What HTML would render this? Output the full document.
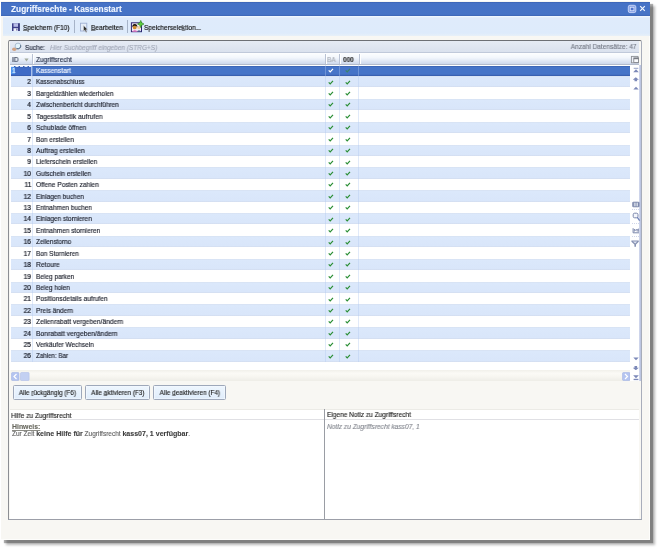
<!DOCTYPE html>
<html><head><meta charset="utf-8"><style>
html,body{margin:0;padding:0;width:659px;height:549px;overflow:hidden;background:#fff;}
body{position:relative;font-family:"Liberation Sans", sans-serif;}
.r{position:absolute;}
.t{position:absolute;white-space:nowrap;line-height:normal;font-family:"Liberation Sans", sans-serif;will-change:transform;-webkit-text-stroke:0.14px currentColor;}
u{text-decoration:underline;text-decoration-thickness:0.6px;text-underline-offset:0.4px;text-decoration-color:rgba(40,40,40,.55);}
</style></head><body>
<div class="r" style="left:0.50px;top:1.00px;width:649.90px;height:539.00px;background:#f8f7f3;border-right:1px solid #fdfdfb;border-bottom:1px solid #fdfdfb;box-sizing:border-box;box-shadow:3px 3px 1px rgba(0,0,0,.3),4.5px 5px 2.5px rgba(0,0,0,.28);"></div>
<div class="r" style="left:1.30px;top:1.50px;width:648.70px;height:14.90px;background:linear-gradient(#3a62b2,#4672c6 10%,#4673c6 88%,#3c64b4);"></div>
<div class="t" style="left:10.60px;transform-origin:0 0;top:4.16px;font-size:8.300px;color:#eef4ff;font-weight:bold;font-style:normal;">Zugriffsrechte - Kassenstart</div>
<svg class="r" style="left:627px;top:4px" width="10" height="10" viewBox="0 0 10 10"><rect x="1.3" y="1.3" width="7.5" height="7.3" rx="1.6" fill="#8aa4e6" stroke="#c2d0f6" stroke-width="1"/><rect x="3.3" y="3.3" width="3.6" height="3.4" fill="#4f72cc" stroke="#d6e0fa" stroke-width="0.8"/></svg>
<svg class="r" style="left:639px;top:5px" width="7" height="7" viewBox="0 0 7 7"><path d="M1.2 1.2 L5.8 5.9 M5.8 1.2 L1.2 5.9" stroke="#f2f6ff" stroke-width="1.2"/></svg>
<div class="r" style="left:3.00px;top:16.40px;width:647.00px;height:19.50px;background:linear-gradient(#f4f9ff,#dfebfb 10%,#deebfb 86%,#e8f0f8);"></div>
<svg class="r" style="left:11px;top:22px" width="10" height="10" viewBox="0 0 10 10"><path d="M1 1.3 H8.6 V9 H1 Z" fill="#3c3e88"/><rect x="2.5" y="1.3" width="4.6" height="3.5" fill="#b8bce8"/><rect x="2.5" y="6.2" width="4.6" height="2.8" fill="#eef0fa"/><rect x="5.4" y="6.6" width="1" height="1.9" fill="#3c3e88"/><rect x="7.6" y="1.3" width="1" height="7.7" fill="#2a2c70"/></svg>
<div class="t" style="left:23.00px;transform-origin:0 0;top:23.60px;font-size:7.065px;color:#141414;font-weight:normal;font-style:normal;transform:scaleX(0.9200);-webkit-text-stroke:0.18px currentColor;"><u>S</u>peichern (F10)</div>
<div class="r" style="left:74.00px;top:19.50px;width:1.00px;height:13.00px;background:#a7b4c8;"></div>
<svg class="r" style="left:79px;top:22px" width="11" height="11" viewBox="0 0 11 11"><rect x="1.5" y="1.2" width="6.3" height="7.8" fill="#e4ecf8" stroke="#9fb0d2" stroke-width="0.9"/><path d="M4.6 3.6 L4.6 9.2 L5.9 8.1 L7 10.4 L7.9 10 L6.8 7.7 L8.5 7.4 Z" fill="#2a2a2a" stroke="#f0f0f0" stroke-width="0.35"/></svg>
<div class="t" style="left:90.80px;transform-origin:0 0;top:23.50px;font-size:7.174px;color:#141414;font-weight:normal;font-style:normal;transform:scaleX(0.9200);-webkit-text-stroke:0.18px currentColor;"><u>B</u>earbeiten</div>
<div class="r" style="left:127.00px;top:19.50px;width:1.00px;height:13.00px;background:#a7b4c8;"></div>
<svg class="r" style="left:130px;top:19.5px" width="15" height="13" viewBox="0 0 15 13"><rect x="1.4" y="2.8" width="10.1" height="8.9" fill="#f2ecf6" stroke="#2c2470" stroke-width="1"/><path d="M6.5 11.7 Q9 8.6 11.5 11.7 Z" fill="#4a5e90"/><circle cx="9" cy="7.6" r="1.7" fill="#f0d0a0"/><path d="M1.9 11.7 Q4.8 8.4 7.8 11.7 Z" fill="#e27cc4"/><circle cx="4.7" cy="7.4" r="1.9" fill="#d08a30"/><path d="M2.1 7.2 Q2.4 4 4.8 4.1 Q7.2 4 7.4 7.2 Q6.5 5.6 4.8 5.7 Q3 5.6 2.1 7.2 Z" fill="#1e140c"/><path d="M10.75 0.4 L11.8 2.9 L14 4 L11.8 5.1 L10.75 7.6 L9.7 5.1 L7.5 4 L9.7 2.9 Z" fill="#5ccf3c" stroke="#237a1c" stroke-width="0.6"/></svg>
<div class="t" style="left:144.40px;transform-origin:0 0;top:23.55px;font-size:7.120px;color:#141414;font-weight:normal;font-style:normal;transform:scaleX(0.9200);-webkit-text-stroke:0.18px currentColor;">Speichersele<u>k</u>tion...</div>
<div class="r" style="left:8.00px;top:40.00px;width:634.00px;height:480.00px;background:#f8f7f3;border-left:1.6px solid #8c8e92;border-top:1.4px solid #6e7075;border-right:1.4px solid #a8adba;border-bottom:1px solid #9aa0ae;box-sizing:border-box;border-radius:2px 2px 0 0;"></div>
<div class="r" style="left:9.60px;top:41.40px;width:629.60px;height:11.20px;background:linear-gradient(#e6ebf4,#dae1ee);border-bottom:1px solid #c0c9da;box-sizing:border-box;"></div>
<svg class="r" style="left:11px;top:41px" width="12" height="11" viewBox="0 0 12 11"><ellipse cx="3.3" cy="8.2" rx="2.2" ry="1.7" fill="#d2a282"/><circle cx="7" cy="5" r="2.9" fill="#e4f4fc" stroke="#9db0c6" stroke-width="0.8"/><path d="M9.6 4.2 A2.9 2.9 0 0 1 5.6 7.6" stroke="#4f6680" stroke-width="1" fill="none"/></svg>
<div class="t" style="left:24.80px;transform-origin:0 0;top:43.55px;font-size:7.011px;color:#242a3c;font-weight:normal;font-style:normal;transform:scaleX(0.9200);">Suche:</div>
<div class="t" style="left:49.80px;transform-origin:0 0;top:43.50px;font-size:7.065px;color:#a3a9b8;font-weight:normal;font-style:italic;transform:scaleX(0.9200);">Hier Suchbegriff eingeben (STRG+S)</div>
<div class="t" style="right:22.50px;transform-origin:100% 0;top:43.45px;font-size:7.120px;color:#757a86;font-weight:normal;font-style:normal;transform:scaleX(0.9200);">Anzahl Datensätze: 47</div>
<div class="r" style="left:9.60px;top:52.60px;width:629.60px;height:12.00px;background:linear-gradient(#fdfeff,#f2f6fc 40%,#cdd8ec 92%,#b4bccc 93%);"></div>
<div class="r" style="left:32.00px;top:53.50px;width:1.00px;height:10.50px;background:#b9c2d4;border-right:1px solid #fff;"></div>
<div class="r" style="left:324.80px;top:53.50px;width:1.00px;height:10.50px;background:#b9c2d4;border-right:1px solid #fff;"></div>
<div class="r" style="left:339.30px;top:53.50px;width:1.00px;height:10.50px;background:#b9c2d4;border-right:1px solid #fff;"></div>
<div class="r" style="left:358.70px;top:53.50px;width:1.00px;height:10.50px;background:#b9c2d4;border-right:1px solid #fff;"></div>
<div class="t" style="left:11.60px;transform-origin:0 0;top:55.50px;font-size:7.065px;color:#263048;font-weight:normal;font-style:normal;transform:scaleX(0.9200);">ID</div>
<svg class="r" style="left:23.5px;top:58px" width="6" height="5" viewBox="0 0 6 5"><path d="M0.4 0.4 H4.6 L2.5 3.6 Z" fill="#a4ab9e"/></svg>
<div class="t" style="left:35.80px;transform-origin:0 0;top:55.50px;font-size:7.065px;color:#263048;font-weight:normal;font-style:normal;transform:scaleX(0.9200);">Zugriffsrecht</div>
<div class="t" style="left:327.40px;transform-origin:0 0;top:55.50px;font-size:7.065px;color:#a9adb5;font-weight:normal;font-style:normal;transform:scaleX(0.9200);">BA</div>
<div class="t" style="left:342.50px;transform-origin:0 0;top:55.50px;font-size:7.065px;color:#333;font-weight:bold;font-style:normal;transform:scaleX(0.9200);">000</div>
<svg class="r" style="left:630px;top:55px" width="10" height="9" viewBox="0 0 10 9"><rect x="1.4" y="1.4" width="6.6" height="6.4" fill="#eef1f8" stroke="#8e9196" stroke-width="0.9"/><rect x="3.8" y="2.9" width="4.8" height="4.6" fill="#fafbfd" stroke="#7a7d84" stroke-width="0.8"/><rect x="3.8" y="2.9" width="4.8" height="1.3" fill="#7a7d84"/></svg>
<div class="r" style="left:9.60px;top:64.60px;width:620.80px;height:305.70px;background:#fff;"></div>
<div class="r" style="left:10.80px;top:65.50px;width:619.60px;height:10.22px;background:linear-gradient(#3860b0,#4574c8 14%,#4674c8 82%,#3458a8);"></div>
<div class="r" style="left:10.80px;top:65.50px;width:21.50px;height:10.22px;background:linear-gradient(#3a62b6,#3f6bc6 14%,#3f6bc6 84%,#3458a8);border-top:1px dashed #dfe8fa;border-right:1px solid #a8c0ec;box-sizing:border-box;"></div>
<div class="r" style="left:11.20px;top:66.80px;width:4.20px;height:7.42px;background:#4f94ec;"></div>
<div class="t" style="left:11.60px;transform-origin:0 0;top:67.00px;font-size:7.065px;color:#e8f6ff;font-weight:normal;font-style:normal;transform:scaleX(0.9200);">1</div>
<div class="t" style="left:35.77px;top:67.00px;font-size:6.85px;color:#f2f6ff;transform-origin:0 0;transform:scaleX(0.9629)">Kassenstart</div>
<svg class="r" style="left:328.2px;top:68.19999999999999px" width="6" height="5" viewBox="0 0 6 5"><path d="M0.7 2.4 L2.2 3.9 L5 0.9" stroke="#ffffff" stroke-width="1.2" fill="none"/></svg>
<svg class="r" style="left:344.8px;top:68.19999999999999px" width="6" height="5" viewBox="0 0 6 5"><path d="M0.7 2.4 L2.2 3.9 L5 0.9" stroke="#3b8468" stroke-width="1.2" fill="none"/></svg>
<div class="r" style="left:10.80px;top:76.02px;width:619.60px;height:11.42px;background:linear-gradient(#d6e0f0,#dbe8fb 10%,#d9e6fa 88%,#d2dcee);"></div>
<div class="t" style="right:627.70px;transform-origin:100% 0;top:78.00px;font-size:7.174px;color:#121622;font-weight:normal;font-style:normal;transform:scaleX(0.9200);-webkit-text-stroke:0.22px currentColor;">2</div>
<div class="t" style="left:35.80px;top:78.00px;font-size:6.85px;color:#181c28;transform-origin:0 0;transform:scaleX(0.9110)">Kassenabschluss</div>
<svg class="r" style="left:328.2px;top:79.61999999999999px" width="6" height="5" viewBox="0 0 6 5"><path d="M0.7 2.4 L2.2 3.9 L5 0.9" stroke="#2a8e34" stroke-width="1.2" fill="none"/></svg>
<svg class="r" style="left:344.8px;top:79.61999999999999px" width="6" height="5" viewBox="0 0 6 5"><path d="M0.7 2.4 L2.2 3.9 L5 0.9" stroke="#2a8e34" stroke-width="1.2" fill="none"/></svg>
<div class="r" style="left:9.60px;top:87.44px;width:620.80px;height:11.42px;background:#fff;"></div>
<div class="t" style="right:627.70px;transform-origin:100% 0;top:90.00px;font-size:7.174px;color:#121622;font-weight:normal;font-style:normal;transform:scaleX(0.9200);-webkit-text-stroke:0.22px currentColor;">3</div>
<div class="t" style="left:35.78px;top:90.00px;font-size:6.85px;color:#181c28;transform-origin:0 0;transform:scaleX(0.9406)">Bargeldzählen wiederholen</div>
<svg class="r" style="left:328.2px;top:91.03999999999999px" width="6" height="5" viewBox="0 0 6 5"><path d="M0.7 2.4 L2.2 3.9 L5 0.9" stroke="#2a8e34" stroke-width="1.2" fill="none"/></svg>
<svg class="r" style="left:344.8px;top:91.03999999999999px" width="6" height="5" viewBox="0 0 6 5"><path d="M0.7 2.4 L2.2 3.9 L5 0.9" stroke="#2a8e34" stroke-width="1.2" fill="none"/></svg>
<div class="r" style="left:10.80px;top:98.86px;width:619.60px;height:11.42px;background:linear-gradient(#d6e0f0,#dbe8fb 10%,#d9e6fa 88%,#d2dcee);"></div>
<div class="t" style="right:627.70px;transform-origin:100% 0;top:101.00px;font-size:7.174px;color:#121622;font-weight:normal;font-style:normal;transform:scaleX(0.9200);-webkit-text-stroke:0.22px currentColor;">4</div>
<div class="t" style="left:36.17px;top:101.00px;font-size:6.85px;color:#181c28;transform-origin:0 0;transform:scaleX(0.9427)">Zwischenbericht durchführen</div>
<svg class="r" style="left:328.2px;top:102.45999999999998px" width="6" height="5" viewBox="0 0 6 5"><path d="M0.7 2.4 L2.2 3.9 L5 0.9" stroke="#2a8e34" stroke-width="1.2" fill="none"/></svg>
<svg class="r" style="left:344.8px;top:102.45999999999998px" width="6" height="5" viewBox="0 0 6 5"><path d="M0.7 2.4 L2.2 3.9 L5 0.9" stroke="#2a8e34" stroke-width="1.2" fill="none"/></svg>
<div class="r" style="left:9.60px;top:110.28px;width:620.80px;height:11.42px;background:#fff;"></div>
<div class="t" style="right:627.70px;transform-origin:100% 0;top:113.00px;font-size:7.174px;color:#121622;font-weight:normal;font-style:normal;transform:scaleX(0.9200);-webkit-text-stroke:0.22px currentColor;">5</div>
<div class="t" style="left:36.17px;top:113.00px;font-size:6.85px;color:#181c28;transform-origin:0 0;transform:scaleX(0.9787)">Tagesstatistik aufrufen</div>
<svg class="r" style="left:328.2px;top:113.88px" width="6" height="5" viewBox="0 0 6 5"><path d="M0.7 2.4 L2.2 3.9 L5 0.9" stroke="#2a8e34" stroke-width="1.2" fill="none"/></svg>
<svg class="r" style="left:344.8px;top:113.88px" width="6" height="5" viewBox="0 0 6 5"><path d="M0.7 2.4 L2.2 3.9 L5 0.9" stroke="#2a8e34" stroke-width="1.2" fill="none"/></svg>
<div class="r" style="left:10.80px;top:121.70px;width:619.60px;height:11.42px;background:linear-gradient(#d6e0f0,#dbe8fb 10%,#d9e6fa 88%,#d2dcee);"></div>
<div class="t" style="right:627.70px;transform-origin:100% 0;top:124.00px;font-size:7.174px;color:#121622;font-weight:normal;font-style:normal;transform:scaleX(0.9200);-webkit-text-stroke:0.22px currentColor;">6</div>
<div class="t" style="left:36.04px;top:124.00px;font-size:6.85px;color:#181c28;transform-origin:0 0;transform:scaleX(0.9472)">Schublade öffnen</div>
<svg class="r" style="left:328.2px;top:125.29999999999998px" width="6" height="5" viewBox="0 0 6 5"><path d="M0.7 2.4 L2.2 3.9 L5 0.9" stroke="#2a8e34" stroke-width="1.2" fill="none"/></svg>
<svg class="r" style="left:344.8px;top:125.29999999999998px" width="6" height="5" viewBox="0 0 6 5"><path d="M0.7 2.4 L2.2 3.9 L5 0.9" stroke="#2a8e34" stroke-width="1.2" fill="none"/></svg>
<div class="r" style="left:9.60px;top:133.12px;width:620.80px;height:11.42px;background:#fff;"></div>
<div class="t" style="right:627.70px;transform-origin:100% 0;top:136.00px;font-size:7.174px;color:#121622;font-weight:normal;font-style:normal;transform:scaleX(0.9200);-webkit-text-stroke:0.22px currentColor;">7</div>
<div class="t" style="left:35.78px;top:136.00px;font-size:6.85px;color:#181c28;transform-origin:0 0;transform:scaleX(0.9502)">Bon erstellen</div>
<svg class="r" style="left:328.2px;top:136.72px" width="6" height="5" viewBox="0 0 6 5"><path d="M0.7 2.4 L2.2 3.9 L5 0.9" stroke="#2a8e34" stroke-width="1.2" fill="none"/></svg>
<svg class="r" style="left:344.8px;top:136.72px" width="6" height="5" viewBox="0 0 6 5"><path d="M0.7 2.4 L2.2 3.9 L5 0.9" stroke="#2a8e34" stroke-width="1.2" fill="none"/></svg>
<div class="r" style="left:10.80px;top:144.54px;width:619.60px;height:11.42px;background:linear-gradient(#d6e0f0,#dbe8fb 10%,#d9e6fa 88%,#d2dcee);"></div>
<div class="t" style="right:627.70px;transform-origin:100% 0;top:147.00px;font-size:7.174px;color:#121622;font-weight:normal;font-style:normal;transform:scaleX(0.9200);-webkit-text-stroke:0.22px currentColor;">8</div>
<div class="t" style="left:36.30px;top:147.00px;font-size:6.85px;color:#181c28;transform-origin:0 0;transform:scaleX(0.9786)">Auftrag erstellen</div>
<svg class="r" style="left:328.2px;top:148.14px" width="6" height="5" viewBox="0 0 6 5"><path d="M0.7 2.4 L2.2 3.9 L5 0.9" stroke="#2a8e34" stroke-width="1.2" fill="none"/></svg>
<svg class="r" style="left:344.8px;top:148.14px" width="6" height="5" viewBox="0 0 6 5"><path d="M0.7 2.4 L2.2 3.9 L5 0.9" stroke="#2a8e34" stroke-width="1.2" fill="none"/></svg>
<div class="r" style="left:9.60px;top:155.96px;width:620.80px;height:11.42px;background:#fff;"></div>
<div class="t" style="right:627.70px;transform-origin:100% 0;top:158.00px;font-size:7.174px;color:#121622;font-weight:normal;font-style:normal;transform:scaleX(0.9200);-webkit-text-stroke:0.22px currentColor;">9</div>
<div class="t" style="left:35.78px;top:158.00px;font-size:6.85px;color:#181c28;transform-origin:0 0;transform:scaleX(0.9481)">Lieferschein erstellen</div>
<svg class="r" style="left:328.2px;top:159.55999999999997px" width="6" height="5" viewBox="0 0 6 5"><path d="M0.7 2.4 L2.2 3.9 L5 0.9" stroke="#2a8e34" stroke-width="1.2" fill="none"/></svg>
<svg class="r" style="left:344.8px;top:159.55999999999997px" width="6" height="5" viewBox="0 0 6 5"><path d="M0.7 2.4 L2.2 3.9 L5 0.9" stroke="#2a8e34" stroke-width="1.2" fill="none"/></svg>
<div class="r" style="left:10.80px;top:167.38px;width:619.60px;height:11.42px;background:linear-gradient(#d6e0f0,#dbe8fb 10%,#d9e6fa 88%,#d2dcee);"></div>
<div class="t" style="right:627.70px;transform-origin:100% 0;top:170.00px;font-size:7.174px;color:#121622;font-weight:normal;font-style:normal;transform:scaleX(0.9200);-webkit-text-stroke:0.22px currentColor;">10</div>
<div class="t" style="left:36.04px;top:170.00px;font-size:6.85px;color:#181c28;transform-origin:0 0;transform:scaleX(0.9404)">Gutschein erstellen</div>
<svg class="r" style="left:328.2px;top:170.98px" width="6" height="5" viewBox="0 0 6 5"><path d="M0.7 2.4 L2.2 3.9 L5 0.9" stroke="#2a8e34" stroke-width="1.2" fill="none"/></svg>
<svg class="r" style="left:344.8px;top:170.98px" width="6" height="5" viewBox="0 0 6 5"><path d="M0.7 2.4 L2.2 3.9 L5 0.9" stroke="#2a8e34" stroke-width="1.2" fill="none"/></svg>
<div class="r" style="left:9.60px;top:178.80px;width:620.80px;height:11.42px;background:#fff;"></div>
<div class="t" style="right:627.70px;transform-origin:100% 0;top:181.00px;font-size:7.174px;color:#121622;font-weight:normal;font-style:normal;transform:scaleX(0.9200);-webkit-text-stroke:0.22px currentColor;">11</div>
<div class="t" style="left:36.04px;top:181.00px;font-size:6.85px;color:#181c28;transform-origin:0 0;transform:scaleX(0.9558)">Offene Posten zahlen</div>
<svg class="r" style="left:328.2px;top:182.4px" width="6" height="5" viewBox="0 0 6 5"><path d="M0.7 2.4 L2.2 3.9 L5 0.9" stroke="#2a8e34" stroke-width="1.2" fill="none"/></svg>
<svg class="r" style="left:344.8px;top:182.4px" width="6" height="5" viewBox="0 0 6 5"><path d="M0.7 2.4 L2.2 3.9 L5 0.9" stroke="#2a8e34" stroke-width="1.2" fill="none"/></svg>
<div class="r" style="left:10.80px;top:190.22px;width:619.60px;height:11.42px;background:linear-gradient(#d6e0f0,#dbe8fb 10%,#d9e6fa 88%,#d2dcee);"></div>
<div class="t" style="right:627.70px;transform-origin:100% 0;top:193.00px;font-size:7.174px;color:#121622;font-weight:normal;font-style:normal;transform:scaleX(0.9200);-webkit-text-stroke:0.22px currentColor;">12</div>
<div class="t" style="left:35.79px;top:193.00px;font-size:6.85px;color:#181c28;transform-origin:0 0;transform:scaleX(0.9379)">Einlagen buchen</div>
<svg class="r" style="left:328.2px;top:193.82px" width="6" height="5" viewBox="0 0 6 5"><path d="M0.7 2.4 L2.2 3.9 L5 0.9" stroke="#2a8e34" stroke-width="1.2" fill="none"/></svg>
<svg class="r" style="left:344.8px;top:193.82px" width="6" height="5" viewBox="0 0 6 5"><path d="M0.7 2.4 L2.2 3.9 L5 0.9" stroke="#2a8e34" stroke-width="1.2" fill="none"/></svg>
<div class="r" style="left:9.60px;top:201.64px;width:620.80px;height:11.42px;background:#fff;"></div>
<div class="t" style="right:627.70px;transform-origin:100% 0;top:204.00px;font-size:7.174px;color:#121622;font-weight:normal;font-style:normal;transform:scaleX(0.9200);-webkit-text-stroke:0.22px currentColor;">13</div>
<div class="t" style="left:35.78px;top:204.00px;font-size:6.85px;color:#181c28;transform-origin:0 0;transform:scaleX(0.9424)">Entnahmen buchen</div>
<svg class="r" style="left:328.2px;top:205.23999999999998px" width="6" height="5" viewBox="0 0 6 5"><path d="M0.7 2.4 L2.2 3.9 L5 0.9" stroke="#2a8e34" stroke-width="1.2" fill="none"/></svg>
<svg class="r" style="left:344.8px;top:205.23999999999998px" width="6" height="5" viewBox="0 0 6 5"><path d="M0.7 2.4 L2.2 3.9 L5 0.9" stroke="#2a8e34" stroke-width="1.2" fill="none"/></svg>
<div class="r" style="left:10.80px;top:213.06px;width:619.60px;height:11.42px;background:linear-gradient(#d6e0f0,#dbe8fb 10%,#d9e6fa 88%,#d2dcee);"></div>
<div class="t" style="right:627.70px;transform-origin:100% 0;top:215.00px;font-size:7.174px;color:#121622;font-weight:normal;font-style:normal;transform:scaleX(0.9200);-webkit-text-stroke:0.22px currentColor;">14</div>
<div class="t" style="left:35.78px;top:215.00px;font-size:6.85px;color:#181c28;transform-origin:0 0;transform:scaleX(0.9468)">Einlagen stornieren</div>
<svg class="r" style="left:328.2px;top:216.66px" width="6" height="5" viewBox="0 0 6 5"><path d="M0.7 2.4 L2.2 3.9 L5 0.9" stroke="#2a8e34" stroke-width="1.2" fill="none"/></svg>
<svg class="r" style="left:344.8px;top:216.66px" width="6" height="5" viewBox="0 0 6 5"><path d="M0.7 2.4 L2.2 3.9 L5 0.9" stroke="#2a8e34" stroke-width="1.2" fill="none"/></svg>
<div class="r" style="left:9.60px;top:224.48px;width:620.80px;height:11.42px;background:#fff;"></div>
<div class="t" style="right:627.70px;transform-origin:100% 0;top:227.00px;font-size:7.174px;color:#121622;font-weight:normal;font-style:normal;transform:scaleX(0.9200);-webkit-text-stroke:0.22px currentColor;">15</div>
<div class="t" style="left:35.78px;top:227.00px;font-size:6.85px;color:#181c28;transform-origin:0 0;transform:scaleX(0.9527)">Entnahmen stornieren</div>
<svg class="r" style="left:328.2px;top:228.07999999999998px" width="6" height="5" viewBox="0 0 6 5"><path d="M0.7 2.4 L2.2 3.9 L5 0.9" stroke="#2a8e34" stroke-width="1.2" fill="none"/></svg>
<svg class="r" style="left:344.8px;top:228.07999999999998px" width="6" height="5" viewBox="0 0 6 5"><path d="M0.7 2.4 L2.2 3.9 L5 0.9" stroke="#2a8e34" stroke-width="1.2" fill="none"/></svg>
<div class="r" style="left:10.80px;top:235.90px;width:619.60px;height:11.42px;background:linear-gradient(#d6e0f0,#dbe8fb 10%,#d9e6fa 88%,#d2dcee);"></div>
<div class="t" style="right:627.70px;transform-origin:100% 0;top:238.00px;font-size:7.174px;color:#121622;font-weight:normal;font-style:normal;transform:scaleX(0.9200);-webkit-text-stroke:0.22px currentColor;">16</div>
<div class="t" style="left:36.17px;top:238.00px;font-size:6.85px;color:#181c28;transform-origin:0 0;transform:scaleX(0.9366)">Zeilenstorno</div>
<svg class="r" style="left:328.2px;top:239.5px" width="6" height="5" viewBox="0 0 6 5"><path d="M0.7 2.4 L2.2 3.9 L5 0.9" stroke="#2a8e34" stroke-width="1.2" fill="none"/></svg>
<svg class="r" style="left:344.8px;top:239.5px" width="6" height="5" viewBox="0 0 6 5"><path d="M0.7 2.4 L2.2 3.9 L5 0.9" stroke="#2a8e34" stroke-width="1.2" fill="none"/></svg>
<div class="r" style="left:9.60px;top:247.32px;width:620.80px;height:11.42px;background:#fff;"></div>
<div class="t" style="right:627.70px;transform-origin:100% 0;top:250.00px;font-size:7.174px;color:#121622;font-weight:normal;font-style:normal;transform:scaleX(0.9200);-webkit-text-stroke:0.22px currentColor;">17</div>
<div class="t" style="left:35.78px;top:250.00px;font-size:6.85px;color:#181c28;transform-origin:0 0;transform:scaleX(0.9404)">Bon Stornieren</div>
<svg class="r" style="left:328.2px;top:250.92px" width="6" height="5" viewBox="0 0 6 5"><path d="M0.7 2.4 L2.2 3.9 L5 0.9" stroke="#2a8e34" stroke-width="1.2" fill="none"/></svg>
<svg class="r" style="left:344.8px;top:250.92px" width="6" height="5" viewBox="0 0 6 5"><path d="M0.7 2.4 L2.2 3.9 L5 0.9" stroke="#2a8e34" stroke-width="1.2" fill="none"/></svg>
<div class="r" style="left:10.80px;top:258.74px;width:619.60px;height:11.42px;background:linear-gradient(#d6e0f0,#dbe8fb 10%,#d9e6fa 88%,#d2dcee);"></div>
<div class="t" style="right:627.70px;transform-origin:100% 0;top:261.00px;font-size:7.174px;color:#121622;font-weight:normal;font-style:normal;transform:scaleX(0.9200);-webkit-text-stroke:0.22px currentColor;">18</div>
<div class="t" style="left:35.77px;top:261.00px;font-size:6.85px;color:#181c28;transform-origin:0 0;transform:scaleX(0.9761)">Retoure</div>
<svg class="r" style="left:328.2px;top:262.34000000000003px" width="6" height="5" viewBox="0 0 6 5"><path d="M0.7 2.4 L2.2 3.9 L5 0.9" stroke="#2a8e34" stroke-width="1.2" fill="none"/></svg>
<svg class="r" style="left:344.8px;top:262.34000000000003px" width="6" height="5" viewBox="0 0 6 5"><path d="M0.7 2.4 L2.2 3.9 L5 0.9" stroke="#2a8e34" stroke-width="1.2" fill="none"/></svg>
<div class="r" style="left:9.60px;top:270.16px;width:620.80px;height:11.42px;background:#fff;"></div>
<div class="t" style="right:627.70px;transform-origin:100% 0;top:273.00px;font-size:7.174px;color:#121622;font-weight:normal;font-style:normal;transform:scaleX(0.9200);-webkit-text-stroke:0.22px currentColor;">19</div>
<div class="t" style="left:35.78px;top:273.00px;font-size:6.85px;color:#181c28;transform-origin:0 0;transform:scaleX(0.9461)">Beleg parken</div>
<svg class="r" style="left:328.2px;top:273.76px" width="6" height="5" viewBox="0 0 6 5"><path d="M0.7 2.4 L2.2 3.9 L5 0.9" stroke="#2a8e34" stroke-width="1.2" fill="none"/></svg>
<svg class="r" style="left:344.8px;top:273.76px" width="6" height="5" viewBox="0 0 6 5"><path d="M0.7 2.4 L2.2 3.9 L5 0.9" stroke="#2a8e34" stroke-width="1.2" fill="none"/></svg>
<div class="r" style="left:10.80px;top:281.58px;width:619.60px;height:11.42px;background:linear-gradient(#d6e0f0,#dbe8fb 10%,#d9e6fa 88%,#d2dcee);"></div>
<div class="t" style="right:627.70px;transform-origin:100% 0;top:284.00px;font-size:7.174px;color:#121622;font-weight:normal;font-style:normal;transform:scaleX(0.9200);-webkit-text-stroke:0.22px currentColor;">20</div>
<div class="t" style="left:35.79px;top:284.00px;font-size:6.85px;color:#181c28;transform-origin:0 0;transform:scaleX(0.9373)">Beleg holen</div>
<svg class="r" style="left:328.2px;top:285.18px" width="6" height="5" viewBox="0 0 6 5"><path d="M0.7 2.4 L2.2 3.9 L5 0.9" stroke="#2a8e34" stroke-width="1.2" fill="none"/></svg>
<svg class="r" style="left:344.8px;top:285.18px" width="6" height="5" viewBox="0 0 6 5"><path d="M0.7 2.4 L2.2 3.9 L5 0.9" stroke="#2a8e34" stroke-width="1.2" fill="none"/></svg>
<div class="r" style="left:9.60px;top:293.00px;width:620.80px;height:11.42px;background:#fff;"></div>
<div class="t" style="right:627.70px;transform-origin:100% 0;top:295.00px;font-size:7.174px;color:#121622;font-weight:normal;font-style:normal;transform:scaleX(0.9200);-webkit-text-stroke:0.22px currentColor;">21</div>
<div class="t" style="left:35.77px;top:295.00px;font-size:6.85px;color:#181c28;transform-origin:0 0;transform:scaleX(0.9606)">Positionsdetails aufrufen</div>
<svg class="r" style="left:328.2px;top:296.6px" width="6" height="5" viewBox="0 0 6 5"><path d="M0.7 2.4 L2.2 3.9 L5 0.9" stroke="#2a8e34" stroke-width="1.2" fill="none"/></svg>
<svg class="r" style="left:344.8px;top:296.6px" width="6" height="5" viewBox="0 0 6 5"><path d="M0.7 2.4 L2.2 3.9 L5 0.9" stroke="#2a8e34" stroke-width="1.2" fill="none"/></svg>
<div class="r" style="left:10.80px;top:304.42px;width:619.60px;height:11.42px;background:linear-gradient(#d6e0f0,#dbe8fb 10%,#d9e6fa 88%,#d2dcee);"></div>
<div class="t" style="right:627.70px;transform-origin:100% 0;top:307.00px;font-size:7.174px;color:#121622;font-weight:normal;font-style:normal;transform:scaleX(0.9200);-webkit-text-stroke:0.22px currentColor;">22</div>
<div class="t" style="left:35.78px;top:307.00px;font-size:6.85px;color:#181c28;transform-origin:0 0;transform:scaleX(0.9547)">Preis ändern</div>
<svg class="r" style="left:328.2px;top:308.02px" width="6" height="5" viewBox="0 0 6 5"><path d="M0.7 2.4 L2.2 3.9 L5 0.9" stroke="#2a8e34" stroke-width="1.2" fill="none"/></svg>
<svg class="r" style="left:344.8px;top:308.02px" width="6" height="5" viewBox="0 0 6 5"><path d="M0.7 2.4 L2.2 3.9 L5 0.9" stroke="#2a8e34" stroke-width="1.2" fill="none"/></svg>
<div class="r" style="left:9.60px;top:315.84px;width:620.80px;height:11.42px;background:#fff;"></div>
<div class="t" style="right:627.70px;transform-origin:100% 0;top:318.00px;font-size:7.174px;color:#121622;font-weight:normal;font-style:normal;transform:scaleX(0.9200);-webkit-text-stroke:0.22px currentColor;">23</div>
<div class="t" style="left:36.17px;top:318.00px;font-size:6.85px;color:#181c28;transform-origin:0 0;transform:scaleX(0.9706)">Zeilenrabatt vergeben/ändern</div>
<svg class="r" style="left:328.2px;top:319.44000000000005px" width="6" height="5" viewBox="0 0 6 5"><path d="M0.7 2.4 L2.2 3.9 L5 0.9" stroke="#2a8e34" stroke-width="1.2" fill="none"/></svg>
<svg class="r" style="left:344.8px;top:319.44000000000005px" width="6" height="5" viewBox="0 0 6 5"><path d="M0.7 2.4 L2.2 3.9 L5 0.9" stroke="#2a8e34" stroke-width="1.2" fill="none"/></svg>
<div class="r" style="left:10.80px;top:327.26px;width:619.60px;height:11.42px;background:linear-gradient(#d6e0f0,#dbe8fb 10%,#d9e6fa 88%,#d2dcee);"></div>
<div class="t" style="right:627.70px;transform-origin:100% 0;top:330.00px;font-size:7.174px;color:#121622;font-weight:normal;font-style:normal;transform:scaleX(0.9200);-webkit-text-stroke:0.22px currentColor;">24</div>
<div class="t" style="left:35.76px;top:330.00px;font-size:6.85px;color:#181c28;transform-origin:0 0;transform:scaleX(0.9797)">Bonrabatt vergeben/ändern</div>
<svg class="r" style="left:328.2px;top:330.86px" width="6" height="5" viewBox="0 0 6 5"><path d="M0.7 2.4 L2.2 3.9 L5 0.9" stroke="#2a8e34" stroke-width="1.2" fill="none"/></svg>
<svg class="r" style="left:344.8px;top:330.86px" width="6" height="5" viewBox="0 0 6 5"><path d="M0.7 2.4 L2.2 3.9 L5 0.9" stroke="#2a8e34" stroke-width="1.2" fill="none"/></svg>
<div class="r" style="left:9.60px;top:338.68px;width:620.80px;height:11.42px;background:#fff;"></div>
<div class="t" style="right:627.70px;transform-origin:100% 0;top:341.00px;font-size:7.174px;color:#121622;font-weight:normal;font-style:normal;transform:scaleX(0.9200);-webkit-text-stroke:0.22px currentColor;">25</div>
<div class="t" style="left:36.30px;top:341.00px;font-size:6.85px;color:#181c28;transform-origin:0 0;transform:scaleX(0.9458)">Verkäufer Wechseln</div>
<svg class="r" style="left:328.2px;top:342.28px" width="6" height="5" viewBox="0 0 6 5"><path d="M0.7 2.4 L2.2 3.9 L5 0.9" stroke="#2a8e34" stroke-width="1.2" fill="none"/></svg>
<svg class="r" style="left:344.8px;top:342.28px" width="6" height="5" viewBox="0 0 6 5"><path d="M0.7 2.4 L2.2 3.9 L5 0.9" stroke="#2a8e34" stroke-width="1.2" fill="none"/></svg>
<div class="r" style="left:10.80px;top:350.10px;width:619.60px;height:11.42px;background:linear-gradient(#d6e0f0,#dbe8fb 10%,#d9e6fa 88%,#d2dcee);"></div>
<div class="t" style="right:627.70px;transform-origin:100% 0;top:352.00px;font-size:7.174px;color:#121622;font-weight:normal;font-style:normal;transform:scaleX(0.9200);-webkit-text-stroke:0.22px currentColor;">26</div>
<div class="t" style="left:36.18px;top:352.00px;font-size:6.85px;color:#181c28;transform-origin:0 0;transform:scaleX(0.9060)">Zahlen: Bar</div>
<svg class="r" style="left:328.2px;top:353.70000000000005px" width="6" height="5" viewBox="0 0 6 5"><path d="M0.7 2.4 L2.2 3.9 L5 0.9" stroke="#2a8e34" stroke-width="1.2" fill="none"/></svg>
<svg class="r" style="left:344.8px;top:353.70000000000005px" width="6" height="5" viewBox="0 0 6 5"><path d="M0.7 2.4 L2.2 3.9 L5 0.9" stroke="#2a8e34" stroke-width="1.2" fill="none"/></svg>
<div class="r" style="left:32.20px;top:64.60px;width:0.90px;height:296.92px;background:rgba(175,200,238,.38);"></div>
<div class="r" style="left:325.20px;top:64.60px;width:0.90px;height:296.92px;background:rgba(175,200,238,.38);"></div>
<div class="r" style="left:339.00px;top:64.60px;width:0.90px;height:296.92px;background:rgba(175,200,238,.38);"></div>
<div class="r" style="left:358.30px;top:64.60px;width:0.90px;height:296.92px;background:rgba(175,200,238,.38);"></div>
<div class="r" style="left:630.40px;top:64.60px;width:9.80px;height:305.70px;background:#fff;"></div>
<div class="r" style="left:638.80px;top:64.60px;width:1.80px;height:316.60px;background:linear-gradient(90deg,#d6dcf0,#b4bedc);"></div>
<svg class="r" style="left:633px;top:66.6px" width="7" height="6" viewBox="0 0 7 6"><rect x="0.7" y="0.8" width="4.6" height="1.0" fill="#7b88b8" opacity=".8"/><path d="M0.2 5.2 L3 2.3 L5.8 5.2 Z" fill="#7b88b8"/></svg>
<svg class="r" style="left:633px;top:76.9px" width="7" height="5" viewBox="0 0 7 5"><path d="M2.8 0.2 L5.9 2.7 H4.1 V4.3 H1.5 V2.7 H-0.3 Z" fill="#7b88b8"/></svg>
<svg class="r" style="left:633px;top:86px" width="7" height="4" viewBox="0 0 7 4"><path d="M0.3 3.6 L3 0.8 L5.7 3.6 Z" fill="#7b88b8"/></svg>
<svg class="r" style="left:632px;top:200.5px" width="8" height="7" viewBox="0 0 8 7"><path d="M1.2 1.2 H6.6 V5.8 H1.2 Z" fill="#eef1f8" stroke="#7a86aa" stroke-width="0.9"/><path d="M3.1 1 V6 M4.8 1 V6" stroke="#7a86aa" stroke-width="0.8"/><path d="M1 1.2 V5.8 M6.8 1.2 V5.8" stroke="#7a86aa" stroke-width="1.3"/></svg>
<div class="r" style="left:632.00px;top:209.40px;width:7.00px;height:1.00px;background:repeating-linear-gradient(90deg,#c4cce4 0 1px,transparent 1px 2px);opacity:.8"></div>
<svg class="r" style="left:631.5px;top:212px" width="9" height="10" viewBox="0 0 9 10"><rect x="1.2" y="1.2" width="4.8" height="4.6" rx="1.4" fill="#f4f6fc" stroke="#7a86aa" stroke-width="1"/><path d="M5.2 5.2 L7.6 8.6" stroke="#6f82b8" stroke-width="1.3"/></svg>
<div class="r" style="left:632.00px;top:222.80px;width:7.00px;height:1.00px;background:repeating-linear-gradient(90deg,#c4cce4 0 1px,transparent 1px 2px);opacity:.8"></div>
<svg class="r" style="left:632px;top:227.5px" width="8" height="6" viewBox="0 0 8 6"><path d="M1.1 0.2 V4.8 H7" stroke="#7a86aa" stroke-width="1" fill="none"/><path d="M2.4 3.6 V1 L3.8 2.6 L5.2 1 V3.6" stroke="#7a86aa" stroke-width="0.9" fill="none"/><path d="M6.4 0.6 V3.8" stroke="#7a86aa" stroke-width="0.9"/></svg>
<div class="r" style="left:632.00px;top:236.00px;width:7.00px;height:1.00px;background:repeating-linear-gradient(90deg,#c4cce4 0 1px,transparent 1px 2px);opacity:.8"></div>
<svg class="r" style="left:631px;top:240px" width="9" height="8" viewBox="0 0 9 8"><path d="M0.4 0.6 H7.8 V1.8 L5 4.4 V6.8 H3.4 V4.4 L0.4 1.8 Z" fill="#7a86aa" opacity=".9"/><path d="M2 1.6 H6.2 L4.2 3.6 Z" fill="#dfe4f2"/></svg>
<svg class="r" style="left:633px;top:357px" width="7" height="4" viewBox="0 0 7 4"><path d="M0.3 0.5 L3 3.2 L5.7 0.5 Z" fill="#7b88b8"/></svg>
<svg class="r" style="left:633px;top:365.6px" width="7" height="5" viewBox="0 0 7 5"><path d="M1.5 0.1 H4.1 V1.7 H5.9 L2.8 4.3 L-0.3 1.7 H1.5 Z" fill="#7b88b8"/></svg>
<div class="r" style="left:10.80px;top:369.60px;width:619.60px;height:11.60px;background:linear-gradient(#f1f0ea,#fbfaf6 30%,#f7f6f1 60%,#efeee8 95%);"></div>
<svg class="r" style="left:10.5px;top:371.5px" width="9" height="9" viewBox="0 0 9 9"><rect x="0.5" y="0.5" width="7.5" height="8" rx="1" fill="#b4c4f0" stroke="#a6b6e6" stroke-width="0.6"/><path d="M5.5 2 L3 4.5 L5.5 7" stroke="#fff" stroke-width="1.2" fill="none"/></svg>
<svg class="r" style="left:19.8px;top:371.5px" width="10" height="9" viewBox="0 0 10 9"><rect x="0.5" y="0.5" width="8.6" height="8" rx="1" fill="#c3d0f2" stroke="#b2c0ea" stroke-width="0.6"/></svg>
<svg class="r" style="left:621.5px;top:371.5px" width="9" height="9" viewBox="0 0 9 9"><rect x="0.5" y="0.5" width="7.6" height="8" rx="1" fill="#b4c4f0" stroke="#a6b6e6" stroke-width="0.6"/><path d="M3 2 L5.5 4.5 L3 7" stroke="#fff" stroke-width="1.2" fill="none"/></svg>
<div class="r" style="left:630.40px;top:370.30px;width:8.80px;height:10.90px;background:#fff;"></div>
<svg class="r" style="left:633px;top:374.6px" width="7" height="6" viewBox="0 0 7 6"><path d="M0.2 0.3 H5.8 L3 3.2 Z" fill="#7b88b8"/><rect x="0.6" y="3.8" width="4.8" height="1.3" fill="#7b88b8"/></svg>
<div class="r" style="left:13.10px;top:385.30px;width:68.90px;height:14.70px;background:linear-gradient(#eef6fe,#e0edfb);border:1px solid #9ea8ba;box-shadow:inset 0 0 0 0.6px #f6faff;box-sizing:border-box;border-radius:1.5px;"></div>
<div class="t" style="left:13.10px;width:74.89px;text-align:center;top:389.20px;font-size:6.957px;color:#1e1e1e;transform:scaleX(0.92);transform-origin:0 0">Alle <u>r</u>ückgängig (F6)</div>
<div class="r" style="left:84.60px;top:385.30px;width:65.80px;height:14.70px;background:linear-gradient(#eef6fe,#e0edfb);border:1px solid #9ea8ba;box-shadow:inset 0 0 0 0.6px #f6faff;box-sizing:border-box;border-radius:1.5px;"></div>
<div class="t" style="left:84.60px;width:71.52px;text-align:center;top:389.20px;font-size:6.957px;color:#1e1e1e;transform:scaleX(0.92);transform-origin:0 0">Alle <u>a</u>ktivieren (F3)</div>
<div class="r" style="left:152.60px;top:385.30px;width:73.80px;height:14.70px;background:linear-gradient(#eef6fe,#e0edfb);border:1px solid #9ea8ba;box-shadow:inset 0 0 0 0.6px #f6faff;box-sizing:border-box;border-radius:1.5px;"></div>
<div class="t" style="left:152.60px;width:80.22px;text-align:center;top:389.20px;font-size:6.957px;color:#1e1e1e;transform:scaleX(0.92);transform-origin:0 0">Alle <u>d</u>eaktivieren (F4)</div>
<div class="r" style="left:9.60px;top:408.60px;width:629.60px;height:111.40px;background:#fff;"></div>
<div class="r" style="left:9.60px;top:408.60px;width:629.60px;height:0.80px;background:#ecebe6;"></div>
<div class="r" style="left:324.20px;top:408.60px;width:1.00px;height:111.40px;background:#9a9da4;"></div>
<div class="r" style="left:9.60px;top:419.20px;width:314.60px;height:0.80px;background:#e0e0e4;"></div>
<div class="r" style="left:325.20px;top:419.20px;width:314.20px;height:0.80px;background:#e0e0e4;"></div>
<div class="r" style="left:9.60px;top:519.20px;width:629.80px;height:1.20px;background:#9c9fa8;"></div>
<div class="t" style="left:11.10px;transform-origin:0 0;top:410.58px;font-size:7.196px;color:#222;font-weight:normal;font-style:normal;transform:scaleX(0.9200);">Hilfe zu Zugriffsrecht</div>
<div class="t" style="left:326.80px;transform-origin:0 0;top:410.65px;font-size:7.120px;color:#222;font-weight:normal;font-style:normal;transform:scaleX(0.9200);">Eigene Notiz zu Zugriffsrecht</div>
<div class="t" style="left:11.60px;transform-origin:0 0;top:422.55px;font-size:6.900px;color:#66665c;font-weight:bold;font-style:normal;text-decoration:underline;text-decoration-thickness:0.6px;text-decoration-color:rgba(90,90,80,.7);-webkit-text-stroke:0.1px currentColor;">Hinweis:</div>
<div class="t" style="left:11.60px;transform-origin:0 0;top:429.62px;font-size:6.500px;color:#666;font-weight:normal;font-style:normal;">Zur Zeit <b style="color:#3a3a3a;font-size:7.05px;-webkit-text-stroke:0.08px currentColor">keine Hilfe für</b> Zugriffsrecht <b style="color:#3a3a3a;font-size:7.05px;-webkit-text-stroke:0.08px currentColor">kass07, 1 verfügbar</b>.</div>
<div class="t" style="left:326.80px;transform-origin:0 0;top:421.78px;font-size:7.196px;color:#858890;font-weight:normal;font-style:italic;transform:scaleX(0.9200);">Notiz zu Zugriffsrecht kass07, 1</div>
</body></html>
